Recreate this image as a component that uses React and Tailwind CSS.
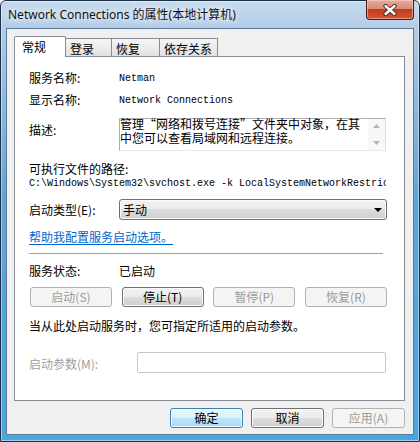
import React from "react";

const btnNormal =
  "border border-[#707070] bg-[linear-gradient(#f2f2f2_0%,#ebebeb_50%,#dddddd_50%,#cfcfcf_100%)] shadow-[inset_0_0_0_1px_#fbfbfb] text-black";
const btnDisabled = "border border-[#adb2b5] bg-[#f4f4f4] text-[#9b9b9b]";
const btnDefault =
  "border border-[#3c7fb1] bg-[linear-gradient(#eaf6fd_0%,#d9f0fc_50%,#bee6fd_50%,#a7d9f5_100%)] shadow-[inset_0_0_0_1px_#f4fbff] text-black";
const tabIdle =
  "ml-[-1px] flex h-[18px] items-center border border-b-0 border-[#898c95] bg-[linear-gradient(#f5f5f5_0%,#ececec_50%,#e0e0e0_100%)] pl-[4px] pt-[2px] text-[12px] leading-[16px]";

function Btn({ kind, className, children }) {
  const look = kind === "default" ? btnDefault : kind === "disabled" ? btnDisabled : btnNormal;
  return (
    <div
      className={`flex items-center justify-center rounded-[3px] text-[12px] leading-[16px] ${look} ${className}`}
    >
      {children}
    </div>
  );
}

function Row({ label, children, className, labelWidth = "w-[90px]" }) {
  return (
    <div className={`flex items-center ${className}`}>
      <div className={`${labelWidth} shrink-0 text-[12px] leading-[16px]`}>{label}</div>
      {children}
    </div>
  );
}

export default function App() {
  return (
    <div className="flex h-[442px] w-[420px] flex-col rounded-t-[6px] border border-[#1d2f44] bg-[linear-gradient(180deg,#c6daee_0px,#aac7e4_40px,#5ea3d7_200px,#4aa7dd_100%)] px-[5px] pb-[6px] font-['Noto_Sans_CJK_SC',sans-serif] text-black shadow-[inset_0_0_0_1px_rgba(255,255,255,0.45)]">
      {/* title bar */}
      <div className="flex h-[27px] shrink-0 items-start justify-between">
        <div className="ml-[2px] mt-[6px] whitespace-nowrap font-['Noto_Sans','Noto_Sans_CJK_SC',sans-serif] text-[12px] leading-[16px] text-[#111] [text-shadow:0_0_6px_#fff,0_0_10px_rgba(255,255,255,0.8)]">
          Network Connections 的属性(本地计算机)
        </div>
        <div className="mt-[-1px] flex h-[20px] w-[48px] items-center justify-center rounded-b-[4px] border border-t-0 border-[#4a1d12] bg-[linear-gradient(#eaab9b_0%,#da8b76_45%,#c43b1d_50%,#d25534_100%)] shadow-[inset_0_0_0_1px_rgba(255,220,210,0.5)]">
          <svg width="14" height="12" viewBox="0 0 14 12">
            <path d="M2.5 2 L11.5 10 M11.5 2 L2.5 10" stroke="#3b2520" strokeWidth="4.2" strokeLinecap="round" />
            <path d="M2.5 2 L11.5 10 M11.5 2 L2.5 10" stroke="#ffffff" strokeWidth="2.4" strokeLinecap="round" />
          </svg>
        </div>
      </div>

      {/* client area */}
      <div className="flex h-[407px] flex-col border border-[#5b7a99] bg-[#f0f0f0] pl-[7px] pr-[8px] pt-[7px]">
        {/* tabs */}
        <div className="flex h-[20px] items-end">
          <div className="relative z-10 -mb-px flex h-[21px] w-[52px] items-center rounded-t-[2px] border border-b-0 border-[#898c95] bg-white pl-[7px] text-[12px] leading-[16px]">
            常规
          </div>
          <div className={`${tabIdle} w-[47px]`}>登录</div>
          <div className={`${tabIdle} w-[49px]`}>恢复</div>
          <div className={`${tabIdle} w-[59px]`}>依存关系</div>
        </div>

        {/* panel */}
        <div className="flex h-[345px] flex-col border border-[#898c95] bg-white pl-[14px] pr-[17px] pt-[13px]">
          <Row label="服务名称:" className="h-[16px]">
            <span className="font-['Liberation_Mono',monospace] text-[10px]">Netman</span>
          </Row>
          <Row label="显示名称:" className="mt-[6px] h-[16px]">
            <span className="font-['Liberation_Mono',monospace] text-[10px]">Network Connections</span>
          </Row>
          <div className="mt-[10px] flex h-[33px] items-start">
            <div className="mt-[4px] w-[90px] shrink-0 text-[12px] leading-[16px]">描述:</div>
            <div className="flex h-[33px] w-[267px] border border-[#abadb3] border-b-[#e3e9ef] border-r-[#dbdfe6] bg-white">
              <div className="mt-[-2px] flex-1 overflow-hidden whitespace-nowrap text-[12px] leading-[14px]">
                管理<span className="[font-feature-settings:'fwid']">“</span>网络和拨号连接
                <span className="[font-feature-settings:'fwid']">”</span>文件夹中对象，在其
                <br />
                中您可以查看局域网和远程连接。
              </div>
              <div className="flex w-[17px] flex-col items-center bg-[#f8f8f8] pt-[5px]">
                <svg width="7" height="4" viewBox="0 0 7 4">
                  <path d="M0 4 L3.5 0 L7 4 Z" fill="#b4b4b4" />
                </svg>
                <svg className="mt-[13px]" width="7" height="4" viewBox="0 0 7 4">
                  <path d="M0 0 L3.5 4 L7 0 Z" fill="#b4b4b4" />
                </svg>
              </div>
            </div>
          </div>

          <div className="mt-[10px] h-[16px] text-[12px] leading-[16px]">可执行文件的路径:</div>
          <div className="flex h-[13px] w-[357px] items-center overflow-hidden whitespace-nowrap font-['Liberation_Mono',monospace] text-[10px] leading-[13px]">
            C:\Windows\System32\svchost.exe -k LocalSystemNetworkRestricted
          </div>

          <Row label="启动类型(E):" className="mt-[9px] h-[21px]">
            <div className="flex h-[21px] w-[268px] items-center justify-between rounded-[3px] border border-[#707070] bg-[linear-gradient(#f2f2f2_0%,#ebebeb_50%,#dddddd_50%,#cfcfcf_100%)] pl-[3px] pr-[4px] shadow-[inset_0_0_0_1px_#fbfbfb]">
              <span className="text-[12px] leading-[16px]">手动</span>
              <svg width="8" height="4" viewBox="0 0 8 4">
                <path d="M0 0 L8 0 L4 4 Z" fill="#000" />
              </svg>
            </div>
          </Row>

          <div className="mt-[9px] h-[16px] text-[12px] leading-[16px] text-[#0066cc] underline underline-offset-2">
            帮助我配置服务启动选项。
          </div>

          <div className="mt-[8px] h-px w-[354px] bg-[#a0a0a0]" />

          <Row label="服务状态:" className="mt-[9px] h-[16px]">
            <span className="text-[12px] leading-[16px]">已启动</span>
          </Row>

          <div className="mt-[8px] flex h-[20px] justify-between pl-[1px]">
            <Btn kind="disabled" className="w-[82px]">启动(S)</Btn>
            <Btn className="w-[82px]">停止(T)</Btn>
            <Btn kind="disabled" className="w-[82px]">暂停(P)</Btn>
            <Btn kind="disabled" className="w-[82px]">恢复(R)</Btn>
          </div>

          <div className="mt-[11px] h-[16px] text-[12px] leading-[16px]">
            当从此处启动服务时，您可指定所适用的启动参数。
          </div>

          <div className="mt-[18px] flex h-[21px] items-center">
            <div className="w-[108px] shrink-0 pt-[2px] text-[12px] leading-[16px] text-[#a0a0a0]">启动参数(M):</div>
            <div className="h-[21px] w-[249px] rounded-[2px] border border-[#c5c8cc] bg-white" />
          </div>
        </div>

        {/* dialog buttons */}
        <div className="mt-[7px] flex justify-end gap-[8px]">
          <Btn kind="default" className="h-[20px] w-[73px]">确定</Btn>
          <Btn className="h-[20px] w-[73px]">取消</Btn>
          <Btn kind="disabled" className="h-[20px] w-[73px]">应用(A)</Btn>
        </div>
      </div>
    </div>
  );
}
